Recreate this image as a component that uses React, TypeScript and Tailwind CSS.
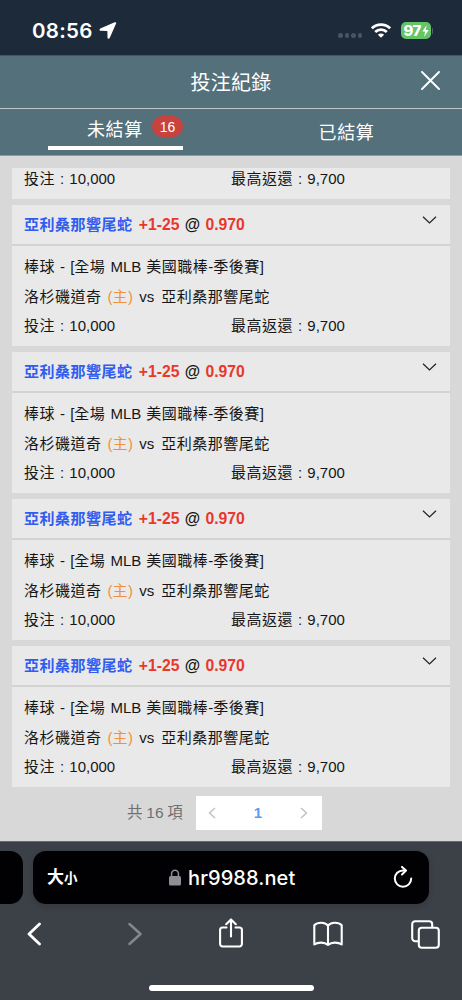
import type { ReactNode } from "react";

const bets = [1, 2, 3, 4];

// Chinese runs are set a touch wider than the Latin ones around them
function Zh({ children, className = "" }: { children: ReactNode; className?: string }) {
  return <span className={`tracking-[0.5px] ${className}`}>{children}</span>;
}

function StatusBar() {
  return (
    <div className="flex h-[55px] shrink-0 items-center bg-[#1d2a3a] pl-8 pr-[31px] pt-[6px] text-white">
      <span className="w-[63px] font-['Inter'] text-[20.5px] font-semibold leading-6 tracking-[0.3px]">
        08:56
      </span>
      <svg className="ml-[4px]" width="18" height="17" viewBox="0 0 17 17" fill="currentColor">
        <path d="M15.2.3.8 6.6c-1.2.6-1 2.2.4 2.2l6.2.1c.3 0 .5.2.5.5l.1 6.1c0 1.4 1.6 1.6 2.2.4L16.6 1.6c.4-.9-.4-1.7-1.4-1.3Z" />
      </svg>
      <div className="ml-auto flex items-center">
        <div className="mt-[10px] flex gap-[2px]">
          <i className="size-[4.5px] rounded-full bg-[#4b5562]" />
          <i className="size-[4.5px] rounded-full bg-[#4b5562]" />
          <i className="size-[4.5px] rounded-full bg-[#4b5562]" />
          <i className="size-[4.5px] rounded-full bg-[#4b5562]" />
        </div>
        <svg className="mr-[2px] ml-[9px]" width="20" height="15" viewBox="0 0 20 15" fill="none" stroke="currentColor" strokeWidth="2.8">
          <path d="M.9 5.3a13 13 0 0 1 18.2 0" />
          <path d="M4.2 8.9a8.3 8.3 0 0 1 11.6 0" />
          <path d="M10 14.8 6.9 11.8a4.4 4.4 0 0 1 6.2 0Z" fill="currentColor" stroke="none" />
        </svg>
        <div className="ml-[8px] flex h-[17px] w-[30px] items-center justify-center rounded-[5px] bg-[#64c466]">
          <span className="font-['Inter'] text-[15px] font-extrabold leading-none tracking-[-0.7px]">97</span>
          <svg className="ml-px" width="7" height="12" viewBox="0 0 7 12" fill="currentColor">
            <path d="M4.6.3.3 6.6h2.8L2.2 11.7l4.5-6.6H3.8Z" />
          </svg>
        </div>
        <i className="-mr-[2px] ml-px h-[6px] w-px rounded-r bg-[#59626f]" />
      </div>
    </div>
  );
}

function Header() {
  return (
    <header className="shrink-0 bg-[#54707b] text-white">
      <div className="relative flex h-[54px] items-center justify-center border-b border-t border-b-[#bdc5c7] border-t-[#405864] pt-[2px]">
        <h1 className="text-[20px] leading-[30px] tracking-[0.2px]">投注紀錄</h1>
        <svg className="absolute right-[22px] top-[15px]" width="19" height="19" viewBox="0 0 19 19" fill="none" stroke="currentColor" strokeWidth="1.9" strokeLinecap="round">
          <path d="m1 1 17 17M18 1 1 18" />
        </svg>
      </div>
      <nav className="flex h-[47px] border-b border-[#899ba2]">
        <div className="flex w-1/2 justify-center">
          <div className="flex h-[41px] w-[135px] items-start justify-end border-b-4 border-white pt-[7px]">
            <span className="pt-px text-[18px] leading-[27px] tracking-[0.7px]">未結算</span>
            <span className="ml-[9px] flex h-[21px] w-[31px] items-center justify-center rounded-full bg-[#c8423e] text-[14px] leading-none">
              16
            </span>
          </div>
        </div>
        <div className="flex w-1/2 justify-center pt-[11px]">
          <span className="text-[18px] leading-[27px] tracking-[0.7px]">已結算</span>
        </div>
      </nav>
    </header>
  );
}

function Amounts() {
  return (
    <div className="flex">
      <span className="w-[207px]">
        <Zh>投注</Zh> : 10,000
      </span>
      <span>
        <Zh>最高返還</Zh> : 9,700
      </span>
    </div>
  );
}

function BetCard() {
  return (
    <article className="bg-[#e9e9e9]">
      <div className="flex h-[41px] justify-between border-b-2 border-[#d3d3d3] pl-3 pr-[13px] font-bold leading-[39px]">
        <p className="whitespace-pre">
          <Zh className="text-[#305cf0]">亞利桑那響尾蛇</Zh>
          <span className="text-[15.75px]">
            <span className="ml-px text-[#e8382c]"> +1-25</span>
            <span> @ </span>
            <span className="text-[#e8382c]">0.970</span>
          </span>
        </p>
        <svg className="mt-[11px]" width="15" height="8" viewBox="0 0 15 8" fill="none" stroke="#222" strokeWidth="1.2">
          <path d="m1 .8 6.5 6.2L14 .8" />
        </svg>
      </div>
      <div className="h-[100px] px-3 pt-[6px] leading-[29.6px]">
        <p>
          <Zh>棒球</Zh> - [<Zh>全場</Zh> MLB <Zh>美國職棒</Zh>-<Zh>季後賽</Zh>]
        </p>
        <p>
          <Zh>洛杉磯道奇</Zh>{" "}
          <span className="mx-px text-[#f0923a]">
            (<Zh>主</Zh>)
          </span>{" "}
          vs <Zh className="ml-[2px]">亞利桑那響尾蛇</Zh>
        </p>
        <Amounts />
      </div>
    </article>
  );
}

function Pagination() {
  return (
    <div className="mt-[9px] flex items-center pl-[115px] text-[#707070]">
      <span className="w-[69px] whitespace-nowrap text-[15.5px] [word-spacing:-0.5px]">
        共 16 項
      </span>
      <div className="flex h-[34px] w-[126px] items-center justify-between bg-white pl-3 pr-[14px]">
        <svg width="8" height="12" viewBox="0 0 8 12" fill="none" stroke="#c0c2c6" strokeWidth="1.5">
          <path d="M7 1 1.5 6 7 11" />
        </svg>
        <span className="font-bold text-[#5b9df5]">1</span>
        <svg width="8" height="12" viewBox="0 0 8 12" fill="none" stroke="#c0c2c6" strokeWidth="1.5">
          <path d="M1 1l5.5 5L1 11" />
        </svg>
      </div>
    </div>
  );
}

function BrowserBar() {
  return (
    <footer className="flex h-[159px] shrink-0 flex-col border-t border-[#646970] bg-[#3c4047] pt-[9px] text-white">
      <div className="flex h-[53px] gap-[10px]">
        <div className="w-[23px] rounded-r-[13px] bg-[#010103]" />
        <div className="flex w-[396px] items-center rounded-[13px] bg-[#010103] pl-[14px] pr-[16px] shadow-[0_2px_6px_rgba(0,0,0,0.15)]">
          <span className="flex w-[122px] items-baseline pt-px font-bold">
            <span className="text-[17px]">大</span>
            <span className="text-[13.5px]">小</span>
          </span>
          <svg width="12" height="17" viewBox="0 0 12 17">
            <path d="M2.6 8V4.6a3.4 3.4 0 0 1 6.8 0V8" fill="none" stroke="#8d8e96" strokeWidth="1.5" />
            <rect y="7" width="12" height="9.6" rx="1.6" fill="#8d8e96" />
          </svg>
          <span className="ml-[7px] font-['Inter'] text-[20px] font-medium tracking-[0.1px]">hr9988.net</span>
          <svg className="ml-auto" width="20" height="24" viewBox="0 0 20 24" fill="none" stroke="currentColor" strokeWidth="2" strokeLinecap="round" strokeLinejoin="round">
            <path d="M12.3 4.4H10a8.2 8.2 0 1 0 8.2 8.2" />
            <path d="m9 .9 4 3.6-4 4" />
          </svg>
        </div>
      </div>
      <div className="flex h-[60px] items-center pl-[27px]">
        <svg width="14" height="24" viewBox="0 0 14 24" fill="none" stroke="currentColor" strokeWidth="2.8" strokeLinecap="round" strokeLinejoin="round">
          <path d="M12.5 2 2 12l10.5 10" />
        </svg>
        <svg className="ml-[87px]" width="14" height="24" viewBox="0 0 14 24" fill="none" stroke="#85878c" strokeWidth="2.5" strokeLinecap="round" strokeLinejoin="round">
          <path d="m1.5 2 11 10-11 10" />
        </svg>
        <svg className="-mt-[2px] ml-[76.5px]" width="24" height="30" viewBox="0 0 24 30" fill="none" stroke="currentColor" strokeWidth="2.1" strokeLinecap="round" strokeLinejoin="round">
          <path d="M7.5 9.5H3.6A2.5 2.5 0 0 0 1.1 12v14a2.5 2.5 0 0 0 2.5 2.5h16.8a2.5 2.5 0 0 0 2.5-2.5V12a2.5 2.5 0 0 0-2.5-2.5h-3.9" />
          <path d="M12 18.5V1.5M7.2 6.2 12 1.4l4.8 4.8" />
        </svg>
        <svg className="ml-[70.5px]" width="30" height="26" viewBox="0 0 30 26" fill="none" stroke="currentColor" strokeWidth="2.1" strokeLinecap="round" strokeLinejoin="round">
          <path d="M15 4.7v19.2M15 4.7C12.4.8 4.6.8 1.3 4.2v19.3c4-2.7 10.1-2.4 13.7.4 3.6-2.8 9.7-3.1 13.7-.4V4.2C25.4.8 17.6.8 15 4.7Z" />
        </svg>
        <svg className="ml-[68px]" width="29" height="29" viewBox="0 0 29 29" fill="none" stroke="currentColor" strokeWidth="2.1" strokeLinejoin="round">
          <path d="M7.4 21.2H4.2a3 3 0 0 1-3-3v-14a3 3 0 0 1 3-3h14a3 3 0 0 1 3 3v3.2" />
          <rect x="7.8" y="7.8" width="20" height="20" rx="3" />
        </svg>
      </div>
      <div className="mx-auto mt-[21px] h-[6px] w-[165px] rounded-full bg-white" />
    </footer>
  );
}

export default function App() {
  return (
    <div className="flex h-[1000px] w-[462px] flex-col overflow-hidden bg-[#d8d8d8] font-['Liberation_Sans','Noto_Sans_CJK_TC',sans-serif] text-[15px] text-[#161616]">
      <StatusBar />
      <Header />
      <main className="min-h-0 flex-1 px-3 pt-[12px] [word-spacing:0.9px]">
        <div className="h-[31px] bg-[#e9e9e9] px-3 leading-[22px]">
          <Amounts />
        </div>
        <div className="mt-[6px] flex flex-col gap-[6px]">
          {bets.map((id) => (
            <BetCard key={id} />
          ))}
        </div>
        <Pagination />
      </main>
      <BrowserBar />
    </div>
  );
}
